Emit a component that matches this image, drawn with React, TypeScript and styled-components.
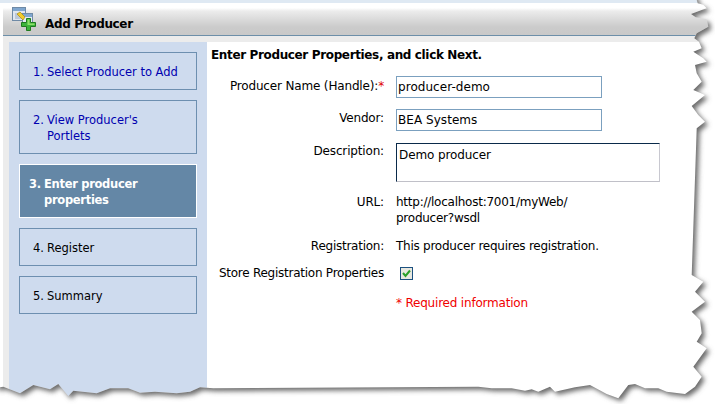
import React from "react";
import styled, { createGlobalStyle } from "styled-components";

const Global = createGlobalStyle`
  html, body { margin: 0; padding: 0; background: #fff; }
  * { box-sizing: border-box; }
`;

const Page = styled.div`
  position: relative;
  width: 715px;
  height: 404px;
  overflow: hidden;
  background: #fff;
  font-family: "DejaVu Sans", sans-serif;
  font-size: 12px;
  color: #000;
`;

const TopBand = styled.div`
  height: 3px;
  background: #dfe9f3;
`;

const Frame = styled.div`
  margin-left: 3px;
  display: flex;
  flex-direction: column;
  height: 401px;
`;

const TitleBar = styled.div`
  height: 33px;
  display: flex;
  align-items: center;
  gap: 6px;
  padding: 0 0 0 9px;
  background: linear-gradient(#fff 0, #fff 5px, #ececec 8px, #d9d9d9 17px, #cbcbcb 24px, #c9c9c9 100%);
  border-bottom: 1px solid #6d8fa9;
`;

const TitleText = styled.span`
  font-weight: bold;
  font-size: 12px;
  letter-spacing: -0.35px;
  padding-top: 10px;
`;

const Body = styled.div`
  flex: 1;
  display: flex;
  background: #ececec;
  padding: 6px 0 0 6px;
`;

const Sidebar = styled.nav`
  width: 198px;
  background: #cedbee;
  padding: 10px 10px 0;
  display: flex;
  flex-direction: column;
  gap: 10px;
`;

const Step = styled.div<{ $state: "link" | "active" | "plain"; $tall?: boolean }>`
  height: ${(p) => (p.$state === "active" || p.$tall ? 54 : 38)}px;
  display: flex;
  align-items: center;
  padding: 2px 0 0 ${(p) => (p.$state === "active" ? 9 : 13)}px;
  border: 1px solid ${(p) => (p.$state === "active" ? "#fff" : "#6d8fb0")};
  background: ${(p) => (p.$state === "active" ? "#6487a6" : "transparent")};
  color: ${(p) => (p.$state === "link" ? "#0000b0" : p.$state === "active" ? "#fff" : "#000")};
  font-weight: ${(p) => (p.$state === "active" ? "bold" : "normal")};
  font-size: 11.5px;
  line-height: 16px;
  letter-spacing: ${(p) => (p.$state === "active" ? "-0.3px" : "-0.02px")};
`;

const StepRow = styled.div`
  display: flex;
  align-items: flex-start;
`;

const StepNum = styled.span<{ $active?: boolean }>`
  flex: none;
  width: ${(p) => (p.$active ? 15 : 14)}px;
`;

const StepLabel = styled.span`
  display: block;
`;

const Content = styled.main`
  flex: 1;
  background: #fff;
  padding: 6px 0 0 5px;
`;

const Heading = styled.div`
  font-weight: bold;
  font-size: 12px;
  line-height: 15px;
  letter-spacing: -0.36px;
  margin: 0 0 13px -1px;
`;

const Form = styled.div`
  display: grid;
  grid-template-columns: 172px 1fr;
  column-gap: 12px;
  font-size: 12px;
  letter-spacing: -0.25px;
`;

const Label = styled.div<{ $mb: number; $pt: number; $wide?: boolean }>`
  text-align: right;
  line-height: 15px;
  padding-top: ${(p) => p.$pt}px;
  margin-bottom: ${(p) => p.$mb}px;
  white-space: nowrap;
  letter-spacing: ${(p) => (p.$wide ? "-0.16px" : "inherit")};
`;

const Star = styled.span`
  color: #e00000;
`;

const Value = styled.div<{ $mb: number }>`
  line-height: 16px;
  margin-bottom: ${(p) => p.$mb}px;
`;

const TextField = styled.div`
  width: 206px;
  height: 22px;
  border: 1px solid #7ba0bf;
  padding: 2px 1px;
  line-height: 16px;
  font-size: 12px;
  letter-spacing: 0.05px;
`;

const TextArea = styled.div`
  width: 264px;
  height: 39px;
  border: 1px solid;
  border-color: #0a2a4a #c8c8d0 #c0c0c8 #0a2a4a;
  padding: 4px 2px;
  line-height: 15px;
  letter-spacing: -0.1px;
`;

const Check = styled.div`
  width: 13px;
  height: 13px;
  margin: 2px 0 0 4px;
  border: 1px solid #1c5180;
  background: #e8e8e0;
  display: flex;
`;

const Required = styled.div`
  color: #f00000;
  line-height: 16px;
  letter-spacing: -0.2px;
`;

const Torn = styled.svg`
  position: absolute;
  left: 0;
  top: 0;
  pointer-events: none;
`;

const zr: [number, number][] = [
  [665,0],[668,10],[685,14],[695,25],[680,30],[648,42],[662,52],[695,58],[700,80],[665,100],[658,115],[672,125],
  [680,145],[655,155],[685,175],[695,185],[660,195],[665,220],[680,245],[655,270],[690,285],[650,318],[670,345],
  [690,365],[665,385],
];
const zb: [number, number][] = [
  [650,15],[685,35],[660,65],[690,95],[650,125],[675,150],[680,190],[665,215],[695,235],[655,290],[680,320],
  [660,350],[630,372],[575,365],[550,355],[510,355],[480,342],[460,345],[430,385],[395,372],[345,345],[300,352],
  [240,365],[225,350],[190,365],[170,358],[150,362],[110,355],[50,355],[10,350],
];
const zl: [number, number][] = [
  [640,355],[600,352],[570,365],[530,370],[465,365],[420,368],[385,355],[330,355],[290,370],[220,362],[205,378],
  [175,342],[150,358],[100,345],[60,370],[10,350],[0,352],
];
const pts = [
  ...zr.map(([x, y]) => [475 + x / 3, y / 3]),
  ...zb.map(([x, y]) => [475 + x / 3, 270 + y / 3]),
  ...zl.map(([x, y]) => [x / 3, 270 + y / 3]),
  [-5, 387],
  [-5, -5],
  [696, -5],
];
const edge = "M" + pts.map(([x, y]) => `${x.toFixed(1)} ${y.toFixed(1)}`).join("L") + "Z";
const outside = `M-20 -20H735V424H-20Z ${edge}`;

const TornEdge = () => (
  <Torn width={715} height={404} viewBox="0 0 715 404">
    <defs>
      <clipPath id="out">
        <path d={outside} clipRule="evenodd" />
      </clipPath>
      <filter id="soft" x="-5%" y="-5%" width="110%" height="110%">
        <feGaussianBlur stdDeviation="2.4" />
      </filter>
    </defs>
    <path d={outside} fillRule="evenodd" fill="#fff" />
    <g clipPath="url(#out)">
      <path d={edge} transform="translate(3 3)" fill="#6a6a6a" filter="url(#soft)" />
    </g>
  </Torn>
);

const AddIcon = () => (
  <svg width="27" height="26" viewBox="0 0 27 26" style={{ flex: "none", marginTop: 1 }}>
    <rect x="0.5" y="0.5" width="13" height="13" fill="#dfe6f0" stroke="#6f8aa6" />
    <rect x="1" y="1" width="12" height="3" fill="#7fa6cf" />
    <rect x="3" y="6" width="8" height="6" fill="#bcc8d8" />
    <rect x="10.5" y="6.5" width="10" height="10" fill="#e6ecf4" stroke="#6f8aa6" />
    <rect x="11" y="7" width="9" height="3" fill="#7fa6cf" />
    <path d="M5 7l3-2 5 5-2 3z" fill="#f2cc2c" stroke="#a88a10" strokeWidth="0.7" />
    <path d="M14.5 11.5h4v4h5v4h-5v4h-4v-4h-5v-4h5z" fill="#3cb43c" stroke="#1f7a1f" strokeWidth="1" />
    <path d="M15.5 12.5h2v4h5v1.500h-7z" fill="#8fe06a" />
  </svg>
);

export default function App() {
  return (
    <Page>
      <Global />
      <TopBand />
      <Frame>
        <TitleBar>
          <AddIcon />
          <TitleText>Add Producer</TitleText>
        </TitleBar>
        <Body>
          <Sidebar>
            <Step $state="link">
              <StepRow>
                <StepNum>1.</StepNum>
                <StepLabel>Select Producer to Add</StepLabel>
              </StepRow>
            </Step>
            <Step $state="link" $tall>
              <StepRow>
                <StepNum>2.</StepNum>
                <StepLabel>View Producer's<br />Portlets</StepLabel>
              </StepRow>
            </Step>
            <Step $state="active">
              <StepRow>
                <StepNum $active>3.</StepNum>
                <StepLabel>Enter producer<br />properties</StepLabel>
              </StepRow>
            </Step>
            <Step $state="plain">
              <StepRow>
                <StepNum>4.</StepNum>
                <StepLabel>Register</StepLabel>
              </StepRow>
            </Step>
            <Step $state="plain">
              <StepRow>
                <StepNum>5.</StepNum>
                <StepLabel>Summary</StepLabel>
              </StepRow>
            </Step>
          </Sidebar>
          <Content>
            <Heading>Enter Producer Properties, and click Next.</Heading>
            <Form>
              <Label $pt={3} $mb={10} $wide>Producer Name (Handle):<Star>*</Star></Label>
              <Value $mb={11}><TextField>producer-demo</TextField></Value>
              <Label $pt={2} $mb={11} $wide>Vendor:</Label>
              <Value $mb={12}><TextField>BEA Systems</TextField></Value>
              <Label $pt={1} $mb={11} $wide>Description:</Label>
              <Value $mb={12}><TextArea>Demo producer</TextArea></Value>
              <Label $pt={1} $mb={11} $wide>URL:</Label>
              <Value $mb={12}>http://localhost:7001/myWeb/<br />producer?wsdl</Value>
              <Label $pt={1} $mb={11}>Registration:</Label>
              <Value $mb={11}>This producer requires registration.</Value>
              <Label $pt={1} $mb={14}>Store Registration Properties</Label>
              <Value $mb={14}>
                <Check>
                  <svg width="11" height="11" viewBox="0 0 11 11">
                    <path d="M2 5l2.500 3L9 2.500" fill="none" stroke="#2aa02a" strokeWidth="2" />
                  </svg>
                </Check>
              </Value>
              <span />
              <Required>* Required information</Required>
            </Form>
          </Content>
        </Body>
      </Frame>
      <TornEdge />
    </Page>
  );
}
